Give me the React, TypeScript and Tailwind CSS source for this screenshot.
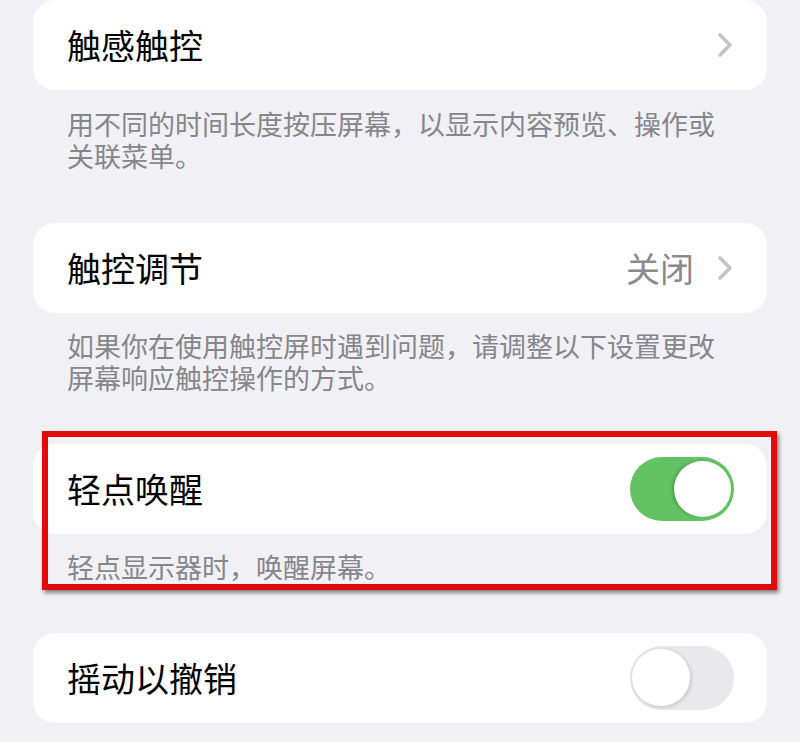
import React from "react";

const font = { fontFamily: '"Noto Sans CJK SC", "Noto Sans", sans-serif' };

function Chevron() {
  return (
    <svg width="18" height="26" viewBox="0 0 18 26" className="shrink-0">
      <polyline
        points="4,3 14,13 4,23"
        fill="none"
        stroke="#c4c4c7"
        strokeWidth="3.6"
        strokeLinecap="round"
        strokeLinejoin="round"
      />
    </svg>
  );
}

function Toggle({ on }: { on: boolean }) {
  return on ? (
    <div className="relative flex h-[64px] w-[104px] shrink-0 items-center justify-end rounded-full bg-[#63c263] pr-[3px]">
      <div className="h-[56px] w-[57px] rounded-full bg-white shadow-[-2px_0_3px_rgba(0,60,0,0.25)]" />
    </div>
  ) : (
    <div className="relative flex h-[64px] w-[104px] shrink-0 items-center justify-start rounded-full bg-[#e9e9eb] pl-[2px]">
      <div className="h-[57px] w-[58px] rounded-full bg-white shadow-[1px_1px_4px_rgba(0,0,0,0.18)]" />
    </div>
  );
}

function Card({ children }: { children: React.ReactNode }) {
  return (
    <div className="flex h-[90px] items-center justify-between rounded-[22px] bg-white pl-[34px] pr-[33px]">
      {children}
    </div>
  );
}

function Title({ children }: { children: React.ReactNode }) {
  return <span className="text-[34px] leading-none text-black">{children}</span>;
}

function Desc({ children, className = "" }: { children: React.ReactNode; className?: string }) {
  return (
    <p className={`px-[34px] text-[27px] leading-[31.5px] text-[#86868b] ${className}`}>{children}</p>
  );
}

export default function App() {
  return (
    <div className="h-[742px] w-[800px] overflow-hidden bg-[#f0f0f5]" style={font}>
      <div className="flex flex-col px-[33px] pt-0">
        <Card>
          <Title>触感触控</Title>
          <Chevron />
        </Card>
        <Desc className="pt-[18px]">用不同的时间长度按压屏幕，以显示内容预览、操作或关联菜单。</Desc>

        <div className="mt-[52px]">
          <Card>
            <Title>触控调节</Title>
            <div className="flex items-center gap-[22px]">
              <span className="text-[34px] leading-none text-[#8a8a8e]">关闭</span>
              <Chevron />
            </div>
          </Card>
        </div>
        <Desc className="pt-[17px]">如果你在使用触控屏时遇到问题，请调整以下设置更改屏幕响应触控操作的方式。</Desc>

        <div className="relative mt-[51px]">
          <Card>
            <Title>轻点唤醒</Title>
            <Toggle on />
          </Card>
          <Desc className="pt-[17px]">轻点显示器时，唤醒屏幕。</Desc>
          <div className="pointer-events-none absolute left-[9px] top-[-13px] h-[159px] w-[735px] border-[6px] border-[#e20b0b] shadow-[2px_3px_4px_rgba(0,0,0,0.45)]" />
        </div>

        <div className="mt-[50px]">
          <Card>
            <Title>摇动以撤销</Title>
            <Toggle on={false} />
          </Card>
        </div>
        <Desc className="pt-[17px]">如果你倾向于意外摇动 iPhone，可以关闭“摇动以撤销”。</Desc>
      </div>
    </div>
  );
}
